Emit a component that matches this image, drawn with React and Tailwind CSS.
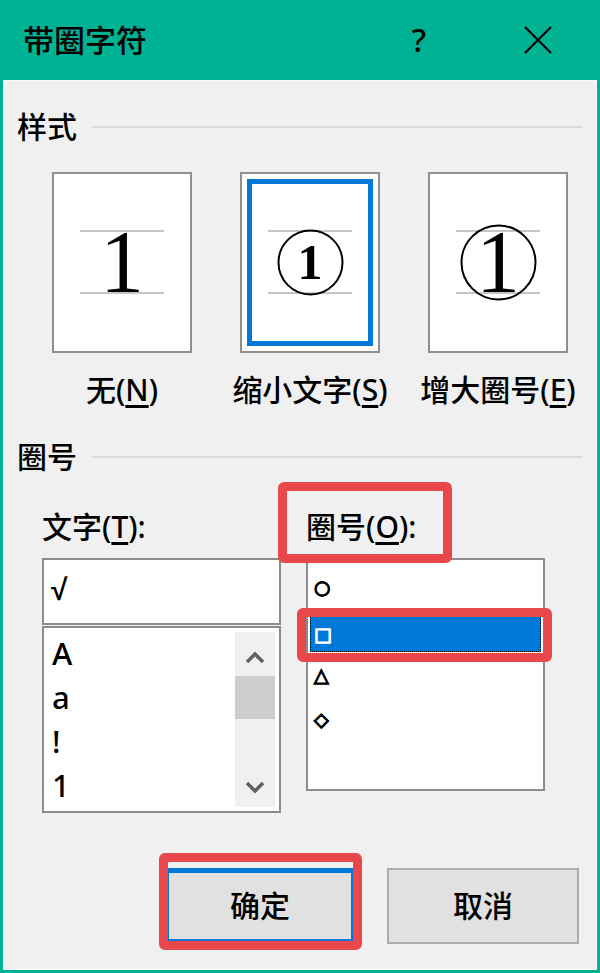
const ui = "font-['Noto_Sans','Noto_Sans_CJK_SC',sans-serif] font-medium"

function SectionHeader({ title, className }) {
	return (
		<div className={`flex items-center pl-[13px] pr-[14px] h-[36px] ${className}`}>
			<span className="text-[30px] leading-[36px]">{title}</span>
			<div className="flex-1 h-[2px] bg-[#dadada] ml-[15px]" />
		</div>
	)
}

function Guides({ children }) {
	return (
		<div className="relative w-[84px] h-[64px] border-y-2 border-[#c6c6c6]">
			<div className="absolute inset-0 flex items-center justify-center">{children}</div>
		</div>
	)
}

function Ring({ size }) {
	return (
		<svg className="absolute" width={size} height={size} viewBox={`0 0 ${size} ${size}`}>
			<circle cx={size / 2} cy={size / 2} r={size / 2 - 1.5} fill="none" stroke="#000" strokeWidth="2" />
		</svg>
	)
}

function StyleOption({ label, children }) {
	return (
		<div className="flex flex-col items-center w-[140px]">
			{children}
			<div className="mt-[19px] text-[30px] leading-[36px] whitespace-nowrap">{label}</div>
		</div>
	)
}

function Chevron({ down }) {
	return (
		<svg width="20" height="13" viewBox="0 0 20 13">
			<polyline
				points={down ? "2,2 10,10 18,2" : "2,11 10,3 18,11"}
				fill="none"
				stroke="#606060"
				strokeWidth="3.5"
			/>
		</svg>
	)
}

export default function App() {
	return (
		<div className={`relative w-[600px] h-[973px] flex flex-col text-black overflow-hidden ${ui}`}>
			{/* title bar */}
			<div className="h-[80px] shrink-0 bg-[#00b294] flex items-center pl-[23px] pr-[48px]">
				<span className="text-[31px] leading-none">带圈字符</span>
				<span className="ml-auto w-[40px] text-center text-[32px] leading-none">?</span>
				<svg className="ml-[85px]" width="28" height="28" viewBox="0 0 28 28">
					<path d="M1 1 L27 27 M27 1 L1 27" stroke="#000" strokeWidth="2.2" />
				</svg>
			</div>

			<div className="flex-1 flex flex-col bg-[#f0f0f0] border-x-[3px] border-b-[3px] border-[#00b294]">
				<div className="flex-1 flex flex-col border border-[#fbfbfb]">
					<SectionHeader title="样式" className="mt-[28px]" />

					<div className="flex gap-[48px] pl-[48px] mt-[27px]">
						<StyleOption label={<>无(<span className="underline underline-offset-4">N</span>)</>}>
							<div className="w-[140px] h-[181px] border-2 border-[#8f8f8f] bg-white flex justify-center pt-[56px]">
								<Guides>
									<span className="font-['Liberation_Serif',serif] font-normal text-[88px] leading-none">1</span>
								</Guides>
							</div>
						</StyleOption>
						<StyleOption label={<>缩小文字(<span className="underline underline-offset-4">S</span>)</>}>
							<div className="w-[140px] h-[181px] border-2 border-[#8f8f8f] bg-white p-[5px] flex">
								<div className="flex-1 border-[5px] border-[#0078d7] flex justify-center pt-[46px]">
									<Guides>
										<Ring size={67} />
										<span className="font-['Liberation_Serif',serif] font-bold text-[50px] leading-none">1</span>
									</Guides>
								</div>
							</div>
						</StyleOption>
						<StyleOption label={<>增大圈号(<span className="underline underline-offset-4">E</span>)</>}>
							<div className="w-[140px] h-[181px] border-2 border-[#8f8f8f] bg-white flex justify-center pt-[56px]">
								<Guides>
									<Ring size={77} />
									<span className="font-['Liberation_Serif',serif] font-normal text-[88px] leading-none">1</span>
								</Guides>
							</div>
						</StyleOption>
					</div>

					<SectionHeader title="圈号" className="mt-[31px]" />

					<div className="flex gap-[25px] pl-[38px] mt-[34px]">
						<div className="w-[239px] flex flex-col">
							<div className="text-[30px] leading-[36px] whitespace-nowrap">
								文字(<span className="underline underline-offset-4">T</span>):
							</div>
							<div className="mt-[13px] h-[67px] border-2 border-[#8c8c8c] bg-white flex items-center pl-[7px] pb-[4px]">
								<span className="font-['Liberation_Sans',sans-serif] font-bold text-[30px] leading-none">√</span>
							</div>
							<div className="mt-[1px] h-[187px] border-2 border-[#8c8c8c] bg-white flex">
								<ul className="flex-1 pt-[3px] pl-[8px] text-[31px] leading-[44px]">
									<li>A</li>
									<li>a</li>
									<li>!</li>
									<li>1</li>
								</ul>
								<div className="w-[40px] my-[4px] mr-[4px] bg-[#f0f0f0] flex flex-col">
									<div className="h-[44px] flex items-center justify-center pt-[6px]">
										<Chevron />
									</div>
									<div className="h-[43px] bg-[#cdcdcd]" />
									<div className="flex-1" />
									<div className="h-[40px] flex items-center justify-center">
										<Chevron down />
									</div>
								</div>
							</div>
						</div>

						<div className="w-[239px] flex flex-col">
							<div className="text-[30px] leading-[36px] whitespace-nowrap">
								圈号(<span className="underline underline-offset-4">O</span>):
							</div>
							<ul className="mt-[13px] h-[233px] border-2 border-[#8c8c8c] bg-white pt-[5px] px-[2px] font-['DejaVu_Sans',sans-serif] font-bold text-[19px] leading-none [-webkit-text-stroke:1.3px_currentColor]">
								<li className="h-[44px] flex items-center pl-[4px]">○</li>
								<li className="h-[44px] pt-[7px]">
									<div className="h-[36px] bg-[#0078d7] border border-dotted border-black flex items-center pl-[3px] text-white">□</div>
								</li>
								<li className="h-[44px] flex items-center pl-[4px]">△</li>
								<li className="h-[44px] flex items-center pl-[4px]">◇</li>
							</ul>
						</div>
					</div>

					<div className="mt-auto mb-[25px] flex justify-end items-start gap-[34px] pr-[17px]">
						<button className="w-[186px] h-[73px] bg-[#e1e1e1] border-2 border-t-[5px] border-[#0078d7] flex items-center justify-center text-[30px] leading-none">
							确定
						</button>
						<button className="w-[192px] h-[76px] bg-[#e1e1e1] border-2 border-[#adadad] flex items-center justify-center text-[30px] leading-none">
							取消
						</button>
					</div>
				</div>
			</div>

			{/* red annotation frames */}
			<div className="pointer-events-none absolute left-[278px] top-[482px] w-[174px] h-[81px] border-[9px] border-[#e8474b] rounded-[6px]" />
			<div className="pointer-events-none absolute left-[297px] top-[608px] w-[255px] h-[54px] border-[9px] border-[#e8474b] rounded-[6px]" />
			<div className="pointer-events-none absolute left-[159px] top-[853px] w-[203px] h-[97px] border-[9px] border-[#e8474b] rounded-[6px]" />
		</div>
	)
}
